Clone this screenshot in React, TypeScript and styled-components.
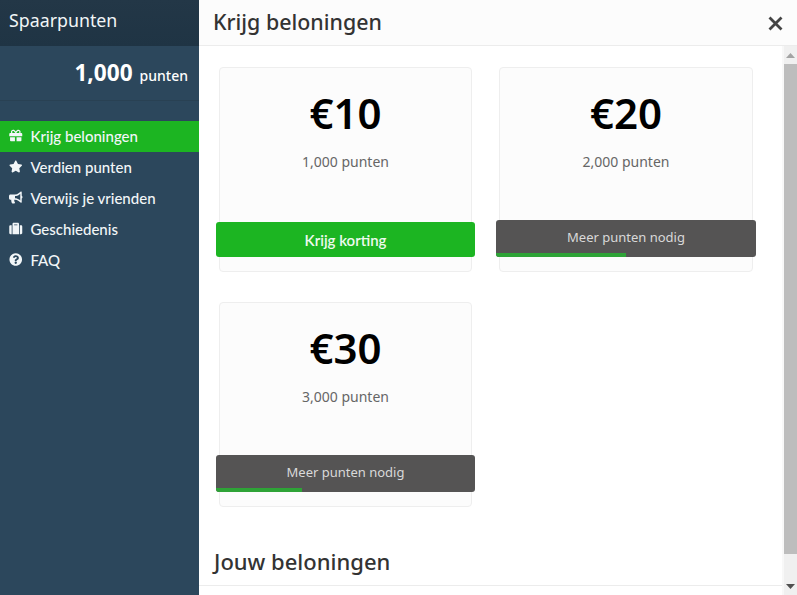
import { ReactNode } from "react"
import styled, { createGlobalStyle } from "styled-components"
import { FaBullhorn, FaGift, FaQuestionCircle, FaStar, FaSuitcase } from "react-icons/fa"

const GlobalStyle = createGlobalStyle`
  html, body {
    margin: 0;
    padding: 0;
    height: 100%;
    overflow: hidden;
    background: #fff;
  }
  #root {
    height: 100%;
  }
  * {
    box-sizing: border-box;
  }
`

const Page = styled.div`
  display: flex;
  width: 797px;
  height: 595px;
  overflow: hidden;
  font-family: "Noto Sans", "Open Sans", sans-serif;
`

const Sidebar = styled.aside`
  flex: 0 0 199px;
  display: flex;
  flex-direction: column;
  background: #2c475c;
  color: #fff;
`

const Brand = styled.div`
  height: 46px;
  padding: 8px 9px 0;
  font-size: 17.8px;
  line-height: 25px;
  color: #f1f5f7;
  background: linear-gradient(#233747, #1f3444);
`

const Balance = styled.div`
  height: 55px;
  padding: 0 11px 0 0;
  display: flex;
  justify-content: flex-end;
  align-items: baseline;
  gap: 7px;
  line-height: 53px;
  border-bottom: 1px solid #294153;
`

const BalanceValue = styled.span`
  font-size: 22.6px;
  font-weight: 700;
`

const BalanceUnit = styled.span`
  font-size: 14px;
  font-weight: 500;
`

const Nav = styled.nav`
  display: flex;
  flex-direction: column;
  margin-top: 20px;
`

const NavItem = styled.div<{ $active?: boolean }>`
  height: 31px;
  display: flex;
  align-items: center;
  gap: 8px;
  padding: 0 0 2px 9px;
  font-family: "Lato", sans-serif;
  font-size: 15px;
  font-weight: 500;
  color: #f2f6f8;
  background: ${(p) => (p.$active ? "#1cb522" : "transparent")};

  svg {
    flex: 0 0 13.5px;
    font-size: 13px;
  }
`

const Main = styled.main`
  flex: 1;
  display: flex;
  flex-direction: column;
  min-width: 0;
`

const Header = styled.header`
  flex: 0 0 46px;
  display: flex;
  align-items: center;
  justify-content: space-between;
  padding: 0 14px 2px 15px;
  background: #fcfcfc;
  border-bottom: 1px solid #ececec;
`

const Title = styled.h1`
  margin: 0 0 0 -1px;
  font-size: 21.4px;
  line-height: 28px;
  font-weight: 500;
  color: #333;
`

const CloseIcon = styled.svg`
  width: 15px;
  height: 15px;
  margin-top: 3px;
  stroke: #444;
  stroke-width: 2.8;
`

const Body = styled.div`
  flex: 1;
  display: flex;
  min-height: 0;
`

const Scroller = styled.div`
  flex: 1;
  min-width: 0;
  overflow: hidden;
`

const Grid = styled.div`
  display: grid;
  grid-template-columns: 253px 254px;
  column-gap: 27px;
  row-gap: 30px;
  padding: 21px 0 0 20px;
`

const Card = styled.div`
  height: 205px;
  display: flex;
  flex-direction: column;
  align-items: center;
  background: #fcfcfc;
  border: 1px solid #eeeeee;
  border-radius: 4px;
`

const Amount = styled.div`
  margin-top: 17px;
  font-size: 42px;
  line-height: 56px;
  font-weight: 600;
  color: #000;
`

const Cost = styled.div`
  margin-top: 11px;
  font-size: 14px;
  line-height: 20px;
  color: #666;
`

const ActionSlot = styled.div`
  align-self: stretch;
  margin: auto -4px 14px;
`

const ClaimButton = styled.button`
  display: block;
  width: 100%;
  height: 35px;
  border: 0;
  padding: 0;
  border-radius: 3px;
  background: #1cb522;
  color: #eefaee;
  font-family: "Lato", sans-serif;
  font-size: 15px;
  font-weight: 600;
`

const LockedButton = styled.div`
  position: relative;
  height: 37px;
  overflow: hidden;
  border-radius: 3px;
  background: #555454;
  color: #d9d9d9;
  font-size: 13px;
  line-height: 34px;
  text-align: center;
`

const Progress = styled.div`
  position: absolute;
  left: 0;
  bottom: 0;
  height: 4px;
  background: #2ea337;
`

const SectionTitle = styled.h2`
  margin: 40px 0 0;
  padding: 0 0 10px 15px;
  font-size: 22px;
  line-height: 28px;
  font-weight: 500;
  color: #333;
  border-bottom: 1px solid #ececec;
`

const ScrollTrack = styled.div`
  flex: 0 0 15px;
  display: flex;
  flex-direction: column;
  align-items: center;
  background: #f0f0f0;
  border-left: 2px solid #f8f8f8;
`

const ScrollArrow = styled.div`
  flex: 0 0 18px;
  display: flex;
  align-items: center;
  justify-content: center;
`

const ScrollThumb = styled.div`
  align-self: stretch;
  height: 490px;
  background: #bdbdbd;
`

const ScrollGap = styled.div`
  flex: 1;
`

type Reward = {
  amount: string
  cost: string
  progress?: number
}

const rewards: Reward[] = [
  { amount: "€10", cost: "1,000 punten" },
  { amount: "€20", cost: "2,000 punten", progress: 50 },
  { amount: "€30", cost: "3,000 punten", progress: 33.3 },
]

const navItems: { label: string; icon: ReactNode; active?: boolean }[] = [
  { label: "Krijg beloningen", icon: <FaGift />, active: true },
  { label: "Verdien punten", icon: <FaStar /> },
  { label: "Verwijs je vrienden", icon: <FaBullhorn /> },
  { label: "Geschiedenis", icon: <FaSuitcase /> },
  { label: "FAQ", icon: <FaQuestionCircle /> },
]

export default function App() {
  return (
    <Page>
      <GlobalStyle />
      <Sidebar>
        <Brand>Spaarpunten</Brand>
        <Balance>
          <BalanceValue>1,000</BalanceValue>
          <BalanceUnit>punten</BalanceUnit>
        </Balance>
        <Nav>
          {navItems.map((item) => (
            <NavItem key={item.label} $active={item.active}>
              {item.icon}
              {item.label}
            </NavItem>
          ))}
        </Nav>
      </Sidebar>
      <Main>
        <Header>
          <Title>Krijg beloningen</Title>
          <CloseIcon viewBox="0 0 15 15">
            <path d="M1.5 1.5 L13.5 13.5 M13.5 1.5 L1.5 13.5" />
          </CloseIcon>
        </Header>
        <Body>
          <Scroller>
            <Grid>
              {rewards.map((reward) => (
                <Card key={reward.amount}>
                  <Amount>{reward.amount}</Amount>
                  <Cost>{reward.cost}</Cost>
                  <ActionSlot>
                    {reward.progress === undefined ? (
                      <ClaimButton>Krijg korting</ClaimButton>
                    ) : (
                      <LockedButton>
                        Meer punten nodig
                        <Progress style={{ width: `${reward.progress}%` }} />
                      </LockedButton>
                    )}
                  </ActionSlot>
                </Card>
              ))}
            </Grid>
            <SectionTitle>Jouw beloningen</SectionTitle>
          </Scroller>
          <ScrollTrack>
            <ScrollArrow>
              <svg width="9" height="5" viewBox="0 0 9 5">
                <path d="M4.5 0 L9 5 L0 5 Z" fill="#a3a3a3" />
              </svg>
            </ScrollArrow>
            <ScrollThumb />
            <ScrollGap />
            <ScrollArrow>
              <svg width="9" height="5" viewBox="0 0 9 5">
                <path d="M0 0 L9 0 L4.5 5 Z" fill="#505050" />
              </svg>
            </ScrollArrow>
          </ScrollTrack>
        </Body>
      </Main>
    </Page>
  )
}
